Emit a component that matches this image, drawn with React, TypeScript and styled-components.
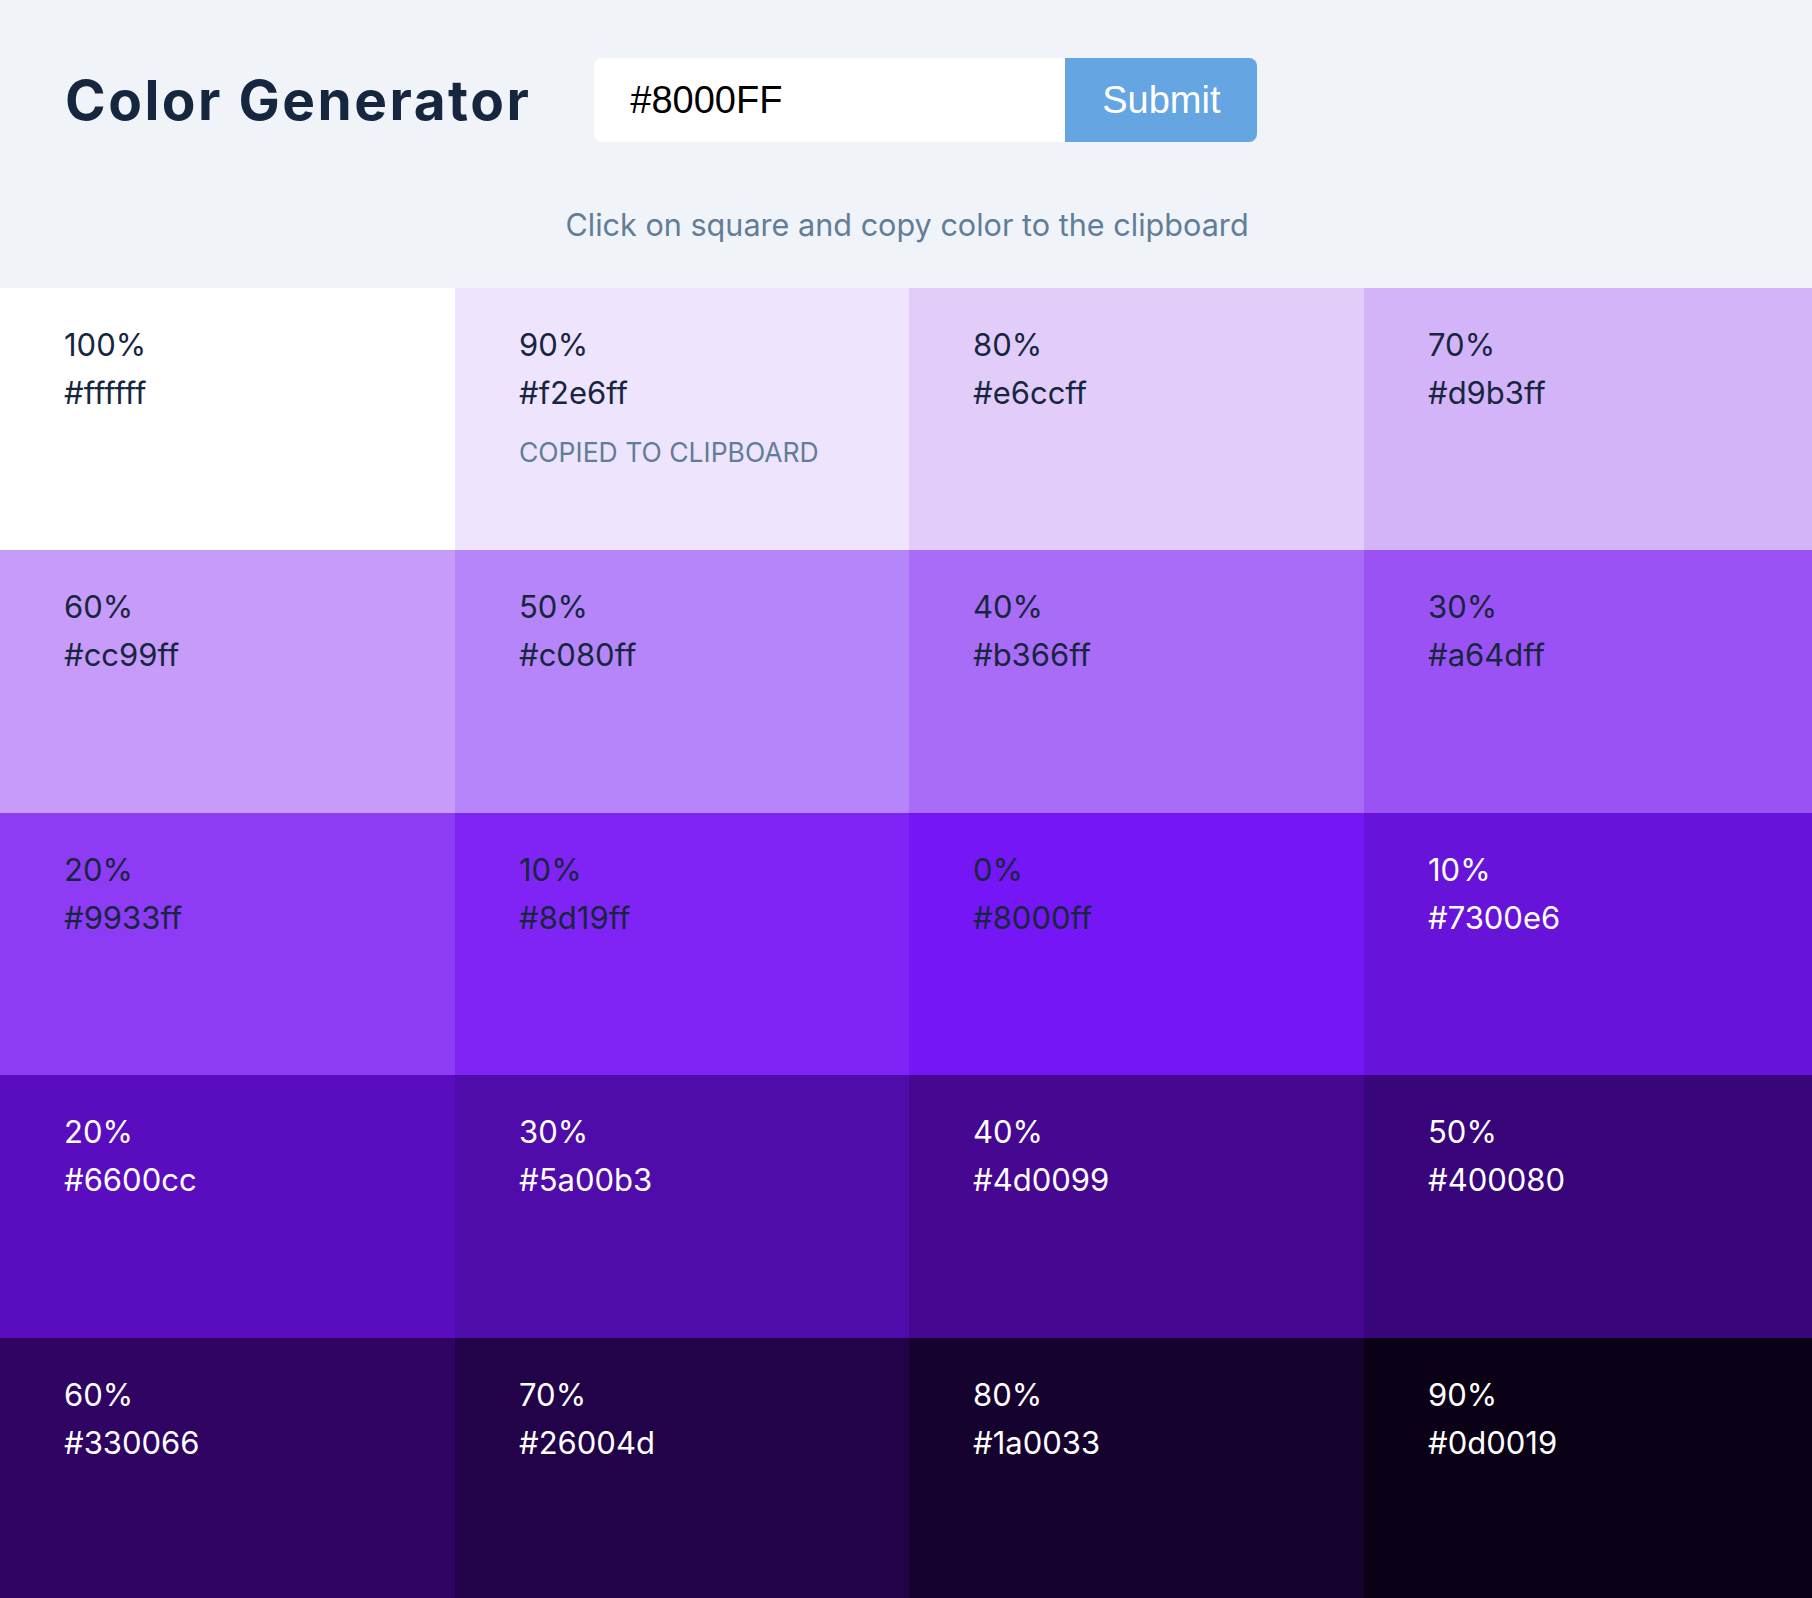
import React from "react";
import styled, { createGlobalStyle } from "styled-components";

const GlobalStyle = createGlobalStyle`
  html, body { margin: 0; padding: 0; }
  body {
    background: #f0f4f8;
    font-family: Inter, "Noto Sans", sans-serif;
    color: #102a43;
    overflow-x: hidden;
  }
  * { box-sizing: border-box; }
`;

const Page = styled.main`
  width: 1812px;
`;

const Header = styled.header`
  padding: 58px 0 39px;
  display: flex;
  flex-direction: column;
`;

const TopRow = styled.div`
  display: flex;
  align-items: center;
  padding-left: 65px;
  gap: 63px;
`;

const Title = styled.h1`
  margin: 0;
  font-family: Inter, sans-serif;
  font-size: 55px;
  font-weight: 700;
  letter-spacing: 2.5px;
  color: #17263f;
  line-height: 1;
`;

const Form = styled.form`
  display: flex;
  height: 84px;
`;

const Input = styled.input`
  width: 471px;
  height: 84px;
  border: none;
  border-radius: 8px 0 0 8px;
  background: #ffffff;
  padding: 0 36px;
  font-family: "Liberation Sans", Arial, sans-serif;
  font-size: 38px;
  color: #000;
  outline: none;
`;

const Button = styled.button`
  width: 192px;
  height: 84px;
  border: none;
  border-radius: 0 8px 8px 0;
  background: #64a5e2;
  color: #ffffff;
  font-family: "Liberation Sans", Arial, sans-serif;
  font-size: 38px;
  cursor: pointer;
  padding: 0;
`;

const Hint = styled.p`
  margin: 59px 0 0;
  text-align: center;
  font-size: 30.6px;
  line-height: 48px;
  color: #627d98;
  padding-left: 2px;
`;

const Grid = styled.section`
  display: grid;
  grid-template-columns: 455px 454px 455px 448px;
  grid-auto-rows: 262.4px;
`;

const Cell = styled.article<{ $light: boolean }>`
  padding: 33px 64px;
  font-size: 31px;
  line-height: 48px;
  color: ${(p) => (p.$light ? "#ffffff" : "#17263f")};
  cursor: pointer;
`;

const Line = styled.p`
  margin: 0;
`;

const Alert = styled.p`
  margin: 17px 0 0;
  font-size: 26.5px;
  line-height: 36px;
  text-transform: uppercase;
  color: #627d98;
`;

const colors: { w: number; hex: string; shown: string }[] = [
  { w: 100, hex: "ffffff", shown: "#ffffff" },
  { w: 90, hex: "f2e6ff", shown: "#efe4fd" },
  { w: 80, hex: "e6ccff", shown: "#e2cdfa" },
  { w: 70, hex: "d9b3ff", shown: "#d3b4f9" },
  { w: 60, hex: "cc99ff", shown: "#c79bf9" },
  { w: 50, hex: "c080ff", shown: "#b585f9" },
  { w: 40, hex: "b366ff", shown: "#a86cf6" },
  { w: 30, hex: "a64dff", shown: "#9b52f5" },
  { w: 20, hex: "9933ff", shown: "#8e3bf6" },
  { w: 10, hex: "8d19ff", shown: "#7f24f4" },
  { w: 0, hex: "8000ff", shown: "#7416f5" },
  { w: 10, hex: "7300e6", shown: "#6713d9" },
  { w: 20, hex: "6600cc", shown: "#5a0dbf" },
  { w: 30, hex: "5a00b3", shown: "#500caa" },
  { w: 40, hex: "4d0099", shown: "#460891" },
  { w: 50, hex: "400080", shown: "#38067a" },
  { w: 60, hex: "330066", shown: "#2f0463" },
  { w: 70, hex: "26004d", shown: "#220349" },
  { w: 80, hex: "1a0033", shown: "#16022f" },
  { w: 90, hex: "0d0019", shown: "#0b0116" },
];

export default function App() {
  return (
    <Page>
      <GlobalStyle />
      <Header>
        <TopRow>
          <Title>Color Generator</Title>
          <Form onSubmit={(e) => e.preventDefault()}>
            <Input type="text" defaultValue="#8000FF" />
            <Button type="submit">Submit</Button>
          </Form>
        </TopRow>
        <Hint>Click on square and copy color to the clipboard</Hint>
      </Header>
      <Grid>
        {colors.map((c, i) => (
          <Cell key={i} $light={i > 10} style={{ background: c.shown }}>
            <Line>{c.w}%</Line>
            <Line>#{c.hex}</Line>
            {i === 1 && <Alert>copied to clipboard</Alert>}
          </Cell>
        ))}
      </Grid>
    </Page>
  );
}
